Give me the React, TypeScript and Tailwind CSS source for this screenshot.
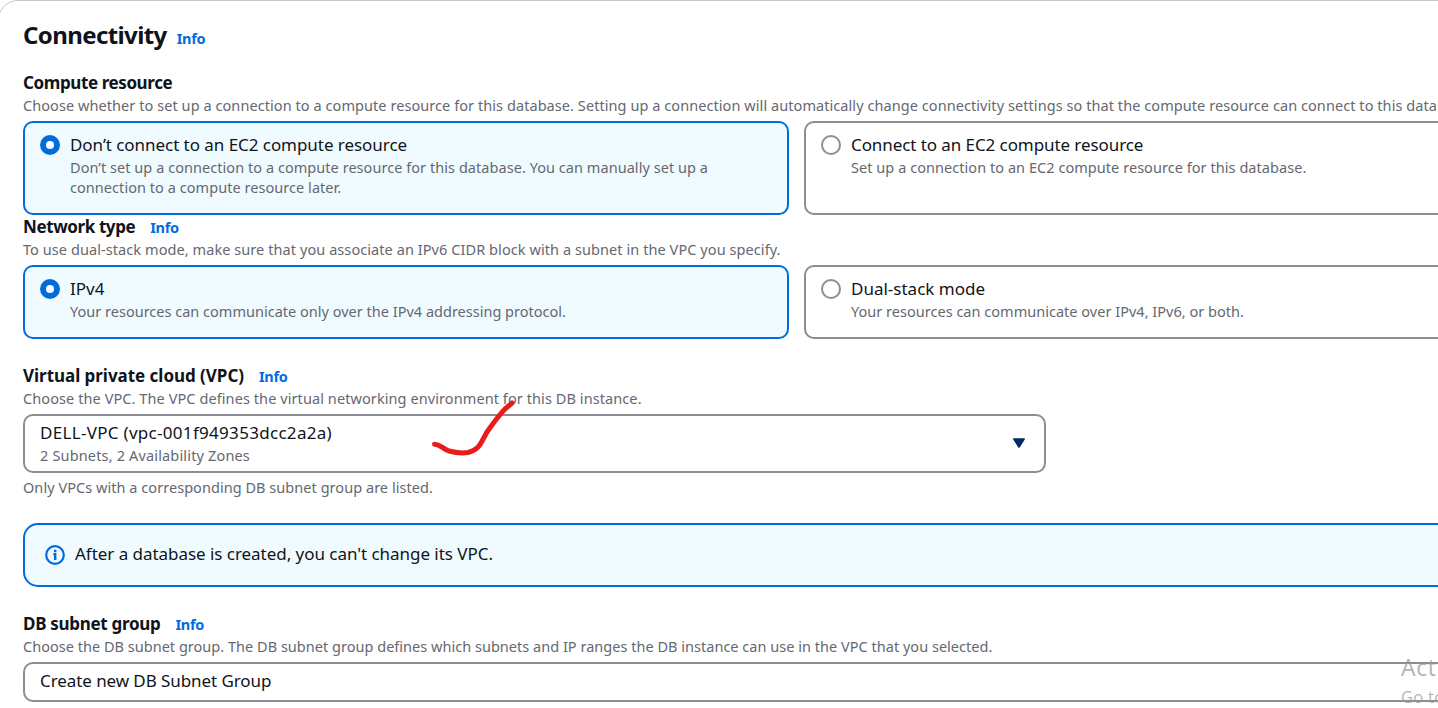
import type { ReactNode } from 'react';

function Info({ className = '' }: { className?: string }) {
  return <a className={`text-[14.5px] font-bold tracking-[-0.3px] text-[#006ce0] ${className}`}>Info</a>;
}

function Label({ children, info = false, track = '' }: { children: ReactNode; info?: boolean; track?: string }) {
  return (
    <div className="flex h-[25px] items-baseline text-[17px] leading-[23px] font-bold text-[#0f141a]">
      <span className={track}>{children}</span>
      {info && <Info className="ml-[15px]" />}
    </div>
  );
}

function Hint({ children, className = 'tracking-[0.05px]' }: { children: ReactNode; className?: string }) {
  return <p className={`h-5 text-[14.5px] leading-[18px] whitespace-nowrap text-[#656871] ${className}`}>{children}</p>;
}

type TileProps = { title: string; lines: string[]; selected?: boolean; titleTrack?: string; hintTrack?: string };

function Tile({ title, lines, selected = false, titleTrack = '', hintTrack = 'tracking-[0.05px]' }: TileProps) {
  return (
    <div
      className={`flex w-[766px] shrink-0 gap-2.5 rounded-[10px] border-2 px-[15px] pt-2.5 pb-[15px] ${
        selected ? 'border-[#006ce0] bg-[#f0fbff]' : 'border-[#8c8c94] bg-white'
      }`}
    >
      <span
        className={`mt-0.5 size-5 shrink-0 rounded-full bg-white ${
          selected ? 'border-[6px] border-[#006ce0]' : 'border-2 border-[#8c8c94]'
        }`}
      />
      <div>
        <div className={`h-[25px] text-[17px] leading-[23px] whitespace-nowrap text-[#0f141a] ${titleTrack}`}>{title}</div>
        {lines.map((l) => (
          <Hint key={l} className={hintTrack}>
            {l}
          </Hint>
        ))}
      </div>
    </div>
  );
}

export default function App() {
  return (
    <div className="relative h-[708px] w-[1438px] overflow-hidden bg-white font-['Noto_Sans',sans-serif]">
      <main className="-ml-0.5 h-[760px] w-[1600px] rounded-[20px] border border-[#c6c6cd] pt-[19px] pl-6">
        <header className="flex h-[51px] items-baseline">
          <h1 className="text-[24px] leading-[30px] font-bold tracking-[-0.6px] text-[#0f141a]">Connectivity</h1>
          <Info className="ml-2.5" />
        </header>

        <section>
          <Label track="tracking-[-0.4px]">Compute resource</Label>
          <Hint className="tracking-[0.067px]">
            Choose whether to set up a connection to a compute resource for this database. Setting up a connection will
            automatically change connectivity settings so that the compute resource can connect to this database.
          </Hint>
          <div className="mt-[5px] flex gap-[15px]">
            <Tile
              selected
              title="Don’t connect to an EC2 compute resource"
              titleTrack="tracking-[-0.05px]"
              lines={[
                'Don’t set up a connection to a compute resource for this database. You can manually set up a',
                'connection to a compute resource later.',
              ]}
            />
            <Tile
              title="Connect to an EC2 compute resource"
              titleTrack="tracking-[-0.08px]"
              lines={['Set up a connection to an EC2 compute resource for this database.']}
            />
          </div>
        </section>

        <section>
          <Label info track="tracking-[-0.4px]">
            Network type
          </Label>
          <Hint className="tracking-[0.075px]">
            To use dual-stack mode, make sure that you associate an IPv6 CIDR block with a subnet in the VPC you specify.
          </Hint>
          <div className="mt-[5px] flex gap-[15px]">
            <Tile
              selected
              title="IPv4"
              lines={['Your resources can communicate only over the IPv4 addressing protocol.']}
              hintTrack="tracking-[0.01px]"
            />
            <Tile
              title="Dual-stack mode"
              lines={['Your resources can communicate over IPv4, IPv6, or both.']}
              hintTrack="tracking-[0.02px]"
            />
          </div>
        </section>

        <section className="mt-[25px]">
          <Label info track="tracking-[-0.03px]">
            Virtual private cloud (VPC)
          </Label>
          <Hint className="tracking-[0.085px]">
            Choose the VPC. The VPC defines the virtual networking environment for this DB instance.
          </Hint>
          <div className="relative mt-[5px] flex h-[59px] w-[1023px] items-center justify-between rounded-[10px] border-2 border-[#8c8c94] pr-[18.5px] pl-[15px]">
            <div>
              <div className="h-[25px] text-[17px] leading-[23px] tracking-[0.3px] text-[#0f141a]">
                DELL-VPC (vpc-001f949353dcc2a2a)
              </div>
              <Hint className="tracking-[0.16px]">2 Subnets, 2 Availability Zones</Hint>
            </div>
            <svg width="13" height="11" viewBox="0 0 13 11">
              <path d="M0.9 1H11.1L6 9Z" fill="#002b66" stroke="#002b66" strokeWidth="1.6" strokeLinejoin="round" />
            </svg>
            <svg className="absolute -top-[16px] left-[405px]" width="90" height="60" viewBox="0 0 90 60">
              <path
                d="M4.5 44.3C11 44.5 12 48.5 19 51C26 53 33 53.2 38 52.5C44 51 48 48.5 51 43L57 32C64 22 70 14 75 9L82 3"
                fill="none"
                stroke="#e91c1c"
                strokeWidth="5"
                strokeLinecap="round"
                strokeLinejoin="round"
              />
            </svg>
          </div>
          <Hint className="mt-[5px] tracking-[0.045px]">Only VPCs with a corresponding DB subnet group are listed.</Hint>
        </section>

        <div className="mt-[25px] flex h-16 items-center gap-2.5 rounded-[15px] border-2 border-[#006ce0] bg-[#f0fbff] pl-5">
          <svg width="20" height="20" viewBox="0 0 20 20" fill="none" stroke="#006ce0">
            <circle cx="10" cy="10" r="8.8" strokeWidth="2.2" />
            <path d="M9 6H11.4M8.4 9.3H10.2V15" strokeWidth="2.4" />
          </svg>
          <p className="h-[25px] text-[17px] leading-[21px] tracking-[-0.04px] text-[#0f141a]">
            After a database is created, you can't change its VPC.
          </p>
        </div>

        <section className="mt-[25px]">
          <Label info track="tracking-[-0.3px]">
            DB subnet group
          </Label>
          <Hint className="tracking-[0.022px]">
            Choose the DB subnet group. The DB subnet group defines which subnets and IP ranges the DB instance can use in
            the VPC that you selected.
          </Hint>
          <div className="mt-[5px] h-10 rounded-[10px] border-2 border-[#8c8c94] pt-[5px] pl-[15px] text-[17px] leading-[23px] tracking-[-0.08px] text-[#0f141a]">
            Create new DB Subnet Group
          </div>
        </section>
      </main>

      <div className="absolute top-[651px] left-[1401px] font-['Open_Sans',sans-serif] whitespace-nowrap text-[#999999]/75">
        <div className="text-[23px] leading-[32px] tracking-[0.6px]">Activate Windows</div>
        <div className="text-[16.5px] leading-[27px] tracking-[0.3px]">Go to Settings to activate Windows.</div>
      </div>
    </div>
  );
}
